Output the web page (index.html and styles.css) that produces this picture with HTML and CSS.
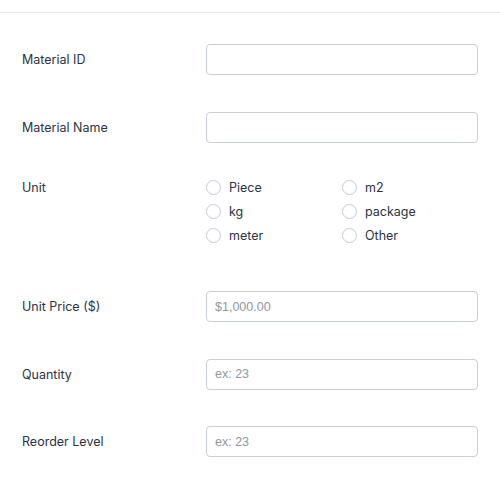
FILE: index.html
```html
<!DOCTYPE html>
<html>
<head>
<meta charset="utf-8">
<link rel="stylesheet" href="styles.css">
</head>
<body>
<div class="form">
  <div class="row">
    <label class="label">Material ID</label>
    <input class="field" type="text">
  </div>
  <div class="row">
    <label class="label">Material Name</label>
    <input class="field" type="text">
  </div>
  <div class="row row-top">
    <label class="label">Unit</label>
    <div class="radios">
      <label class="radio"><span class="circle"></span><span class="radio-text">Piece</span></label>
      <label class="radio"><span class="circle"></span><span class="radio-text">m2</span></label>
      <label class="radio"><span class="circle"></span><span class="radio-text">kg</span></label>
      <label class="radio"><span class="circle"></span><span class="radio-text">package</span></label>
      <label class="radio"><span class="circle"></span><span class="radio-text">meter</span></label>
      <label class="radio"><span class="circle"></span><span class="radio-text">Other</span></label>
    </div>
  </div>
  <div class="row">
    <label class="label">Unit Price ($)</label>
    <input class="field" type="text" placeholder="$1,000.00">
  </div>
  <div class="row">
    <label class="label">Quantity</label>
    <input class="field" type="text" placeholder="ex: 23">
  </div>
  <div class="row">
    <label class="label">Reorder Level</label>
    <input class="field" type="text" placeholder="ex: 23">
  </div>
</div>
</body>
</html>
```

FILE: styles.css
```css
html, body {
  margin: 0;
  padding: 0;
  background: #ffffff;
}

body {
  font-family: Inter, "Liberation Sans", sans-serif;
  color: #2c3345;
}

.form {
  margin-top: 12px;
  border-top: 1px solid #e6e8ee;
  padding-top: 13px;
}

.row {
  display: flex;
  align-items: center;
  padding: 18px 22px 18.5px 22px;
}

.row-top {
  align-items: flex-start;
  padding-bottom: 30px;
}

.label {
  width: 184px;
  flex: none;
  font-size: 12.5px;
  font-weight: 400;
  line-height: 16px;
  padding-top: 1px;
  color: #2c3345;
}

.field {
  box-sizing: border-box;
  width: 273px;
  height: 31px;
  margin: 0;
  border: 1px solid #c8ceda;
  border-radius: 4px;
  padding: 0 8px;
  font-family: "Liberation Sans", Arial, sans-serif;
  font-size: 12.5px;
  color: #2c3345;
  background: #fff;
  outline: none;
}

.field::placeholder {
  color: #8f96a3;
}

.radios {
  display: grid;
  grid-template-columns: 136px 136px;
  row-gap: 8px;
}

.radio {
  display: flex;
  align-items: center;
  height: 16px;
  font-size: 12.5px;
  line-height: 16px;
  color: #2c3345;
}

.radio-text {
  padding-top: 1px;
}

.circle {
  box-sizing: border-box;
  width: 15px;
  height: 15px;
  border: 1px solid #c3cad8;
  border-radius: 50%;
  margin-right: 8px;
  flex: none;
}
```
